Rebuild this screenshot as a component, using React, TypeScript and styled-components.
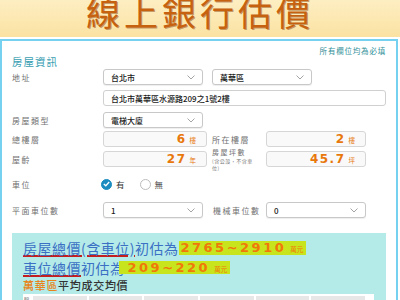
import styled, { createGlobalStyle } from 'styled-components';

const GlobalStyle = createGlobalStyle`
  html, body {
    margin: 0;
    padding: 0;
    background: #fff;
  }
  body {
    font-family: "Noto Sans CJK TC", "Noto Sans", sans-serif;
    width: 400px;
    height: 300px;
    overflow: hidden;
  }
`;

const Page = styled.div`
  width: 400px;
`;

const Banner = styled.header`
  height: 37px;
  background: linear-gradient(#fdeec2, #fbe2a2);
  display: flex;
  justify-content: center;
  overflow: hidden;
`;

const Title = styled.h1`
  margin: 0;
  font-size: 34px;
  line-height: 24px;
  font-weight: 400;
  letter-spacing: 4px;
  color: #c6620f;
  text-shadow: 1px 1px 0 rgba(130, 55, 0, 0.45);
`;

const Card = styled.section`
  margin: 2px 2px 0 0;
  border: 2px solid #76d0f0;
  border-bottom: none;
  padding: 5px 10px 0;
  background: #fff;
`;

const Note = styled.div`
  text-align: right;
  font-size: 7.5px;
  line-height: 10px;
  letter-spacing: 0.8px;
  color: #2f8f98;
`;

const SectionTitle = styled.h2`
  margin: 0;
  font-size: 10.5px;
  line-height: 12px;
  font-weight: 400;
  letter-spacing: 1px;
  color: #3aa0b2;
`;

const Row = styled.div<{ $top: number }>`
  display: flex;
  align-items: center;
  height: 16px;
  margin-top: ${(p) => p.$top}px;
`;

const Label = styled.div`
  width: 91px;
  flex: none;
  font-size: 8px;
  letter-spacing: 1.5px;
  color: #707070;
`;

const SubLabel = styled.div<{ $w: number; $pad: number }>`
  width: ${(p) => p.$w}px;
  flex: none;
  box-sizing: border-box;
  padding-left: ${(p) => p.$pad}px;
  font-size: 8px;
  line-height: 9px;
  letter-spacing: 1.5px;
  color: #707070;
`;

const LabelHead = styled.div`
  font-size: 7px;
  line-height: 10px;
`;

const LabelNote = styled.div`
  width: 46px;
  font-size: 5px;
  line-height: 7.4px;
  letter-spacing: 0.5px;
  color: #777;
`;

const SelectBox = styled.div<{ $w: number }>`
  width: ${(p) => p.$w}px;
  height: 16px;
  flex: none;
  box-sizing: border-box;
  border: 1px solid #c8c8c8;
  border-radius: 3px;
  background: #fff;
  box-shadow: 0 1px 1px rgba(0, 0, 0, 0.07);
  display: flex;
  align-items: center;
  justify-content: space-between;
  padding: 0 7px;
  font-size: 8px;
  font-weight: 500;
  color: #1a1a1a;
`;

const SelectGap = styled.div`
  width: 9px;
  flex: none;
`;

const TextInput = styled.div`
  width: 283px;
  height: 16px;
  box-sizing: border-box;
  border: 1px solid #d0d0d0;
  border-radius: 3px;
  display: flex;
  align-items: center;
  padding: 0 7px;
  font-size: 8px;
  font-weight: 500;
  color: #1a1a1a;
`;

const NumBox = styled.div<{ $w: number }>`
  width: ${(p) => p.$w}px;
  height: 16px;
  flex: none;
  box-sizing: border-box;
  border: 1px solid #d6d6d6;
  border-radius: 3px;
  background: #f9f9f9;
  display: flex;
  align-items: baseline;
  justify-content: flex-end;
  padding: 0 10px 0 0;
  line-height: 15px;
  color: #e8780c;
`;

const NumValue = styled.span`
  font-family: "DejaVu Sans", "Liberation Sans", sans-serif;
  font-weight: 700;
  font-size: 12px;
  letter-spacing: 1.5px;
`;

const NumUnit = styled.span`
  font-size: 6.5px;
  margin-left: 3px;
`;

const RadioGroup = styled.div`
  display: flex;
  align-items: center;
  margin-left: -2px;
`;

const RadioDot = styled.span<{ $checked?: boolean }>`
  width: 11px;
  height: 11px;
  box-sizing: border-box;
  border-radius: 50%;
  border: 1px solid ${(p) => (p.$checked ? '#1d8dc0' : '#bcbcbc')};
  background: ${(p) => (p.$checked ? '#1d8dc0' : '#fff')};
  display: flex;
  align-items: center;
  justify-content: center;
`;

const RadioText = styled.span<{ $gap: number }>`
  margin: 0 ${(p) => p.$gap}px 0 4px;
  font-size: 8.5px;
  color: #333;
`;

const Result = styled.div`
  margin-top: 15px;
  background: #b4ebe8;
  padding: 8px 12px 0 11px;
`;

const ResultLine = styled.div<{ $h: number; $top: number }>`
  display: flex;
  align-items: center;
  height: ${(p) => p.$h}px;
  margin-top: ${(p) => p.$top}px;
`;

const Lead = styled.span`
  font-size: 14px;
  line-height: 14px;
  letter-spacing: 0.5px;
  color: #3b70c4;
  white-space: nowrap;
`;

const Underlined = styled.span`
  text-decoration-line: underline;
  text-decoration-color: #c41e1e;
  text-decoration-thickness: 2px;
  text-underline-offset: 1px;
`;

const Highlight = styled.span<{ $shift: number; $pad: number }>`
  display: flex;
  align-items: baseline;
  height: 100%;
  margin-left: ${(p) => p.$shift}px;
  padding: 0 3px 0 ${(p) => p.$pad}px;
  background: #c8e41c;
  color: #f0780a;
  line-height: 13px;
`;

const Amount = styled.span`
  font-family: "DejaVu Sans", "Liberation Sans", sans-serif;
  font-weight: 700;
  font-size: 13px;
  letter-spacing: 2.5px;
`;

const AmountUnit = styled.span`
  font-size: 6.5px;
  margin-left: 4px;
`;

const AreaTitle = styled.div`
  font-size: 11px;
  line-height: 12px;
  letter-spacing: 0.7px;
  font-weight: 500;
  color: #333;
`;

const Orange = styled.span`
  color: #e8841a;
`;

const Chart = styled.div`
  margin-top: 3px;
  height: 40px;
  background: #fff;
  display: flex;
  padding: 2px 9px 0 1px;
`;

const Axis = styled.div`
  width: 9px;
  flex: none;
  font-family: "DejaVu Sans", sans-serif;
  font-size: 4px;
  color: #555;
`;

const Bars = styled.div`
  flex: 1;
  display: grid;
  grid-template-columns: repeat(6, 1fr);
  gap: 2px;
`;

const Bar = styled.div`
  background: #e7e7e7;
`;

const Chevron = () => (
  <svg width="8" height="5" viewBox="0 0 8 5">
    <polyline points="0.5,0.5 4,4 7.5,0.5" fill="none" stroke="#9a9a9a" strokeWidth="0.9" />
  </svg>
);

const Check = () => (
  <svg width="7" height="6" viewBox="0 0 7 6">
    <polyline points="0.8,3 2.8,4.8 6.2,1" fill="none" stroke="#fff" strokeWidth="1.3" />
  </svg>
);

const Select = ({ value, w = 100 }: { value: string; w?: number }) => (
  <SelectBox $w={w}>
    <span>{value}</span>
    <Chevron />
  </SelectBox>
);

const Num = ({ value, unit, w }: { value: string; unit: string; w: number }) => (
  <NumBox $w={w}>
    <NumValue>{value}</NumValue>
    <NumUnit>{unit}</NumUnit>
  </NumBox>
);

export default function App() {
  return (
    <Page>
      <GlobalStyle />
      <Banner>
        <Title>線上銀行估價</Title>
      </Banner>
      <Card>
        <Note>所有欄位均為必填</Note>
        <SectionTitle>房屋資訊</SectionTitle>

        <Row $top={1}>
          <Label>地址</Label>
          <Select value="台北市" />
          <SelectGap />
          <Select value="萬華區" />
        </Row>
        <Row $top={5}>
          <Label />
          <TextInput>台北市萬華區水源路209之1號2樓</TextInput>
        </Row>
        <Row $top={6}>
          <Label>房屋類型</Label>
          <Select value="電梯大廈" />
        </Row>
        <Row $top={3}>
          <Label>總樓層</Label>
          <Num value="6" unit="樓" w={104} />
          <SubLabel $w={59} $pad={5}>所在樓層</SubLabel>
          <Num value="2" unit="樓" w={100} />
        </Row>
        <Row $top={4}>
          <Label>屋齡</Label>
          <Num value="27" unit="年" w={104} />
          <SubLabel $w={59} $pad={5}>
            <LabelHead>房屋坪數</LabelHead>
            <LabelNote>(含公設，不含車位)</LabelNote>
          </SubLabel>
          <Num value="45.7" unit="坪" w={100} />
        </Row>
        <Row $top={9}>
          <Label>車位</Label>
          <RadioGroup>
            <RadioDot $checked>
              <Check />
            </RadioDot>
            <RadioText $gap={15}>有</RadioText>
            <RadioDot />
            <RadioText $gap={0}>無</RadioText>
          </RadioGroup>
        </Row>
        <Row $top={10}>
          <Label>平面車位數</Label>
          <Select value="1" />
          <SubLabel $w={63} $pad={10}>機械車位數</SubLabel>
          <Select value="0" />
        </Row>

        <Result>
          <ResultLine $h={14} $top={0}>
            <Lead>
              <Underlined>房屋總價(含車位)</Underlined>初估為
            </Lead>
            <Highlight $shift={1} $pad={1}>
              <Amount>2765~2910</Amount>
              <AmountUnit>萬元</AmountUnit>
            </Highlight>
          </ResultLine>
          <ResultLine $h={13} $top={6}>
            <Lead>
              <Underlined>車位總價</Underlined>初估為
            </Lead>
            <Highlight $shift={-6} $pad={9}>
              <Amount>209~220</Amount>
              <AmountUnit>萬元</AmountUnit>
            </Highlight>
          </ResultLine>
          <ResultLine $h={12} $top={5}>
            <AreaTitle>
              <Orange>萬華區</Orange>平均成交均價
            </AreaTitle>
          </ResultLine>
          <Chart>
            <Axis>80</Axis>
            <Bars>
              {Array.from({ length: 6 }).map((_, i) => (
                <Bar key={i} />
              ))}
            </Bars>
          </Chart>
        </Result>
      </Card>
    </Page>
  );
}
